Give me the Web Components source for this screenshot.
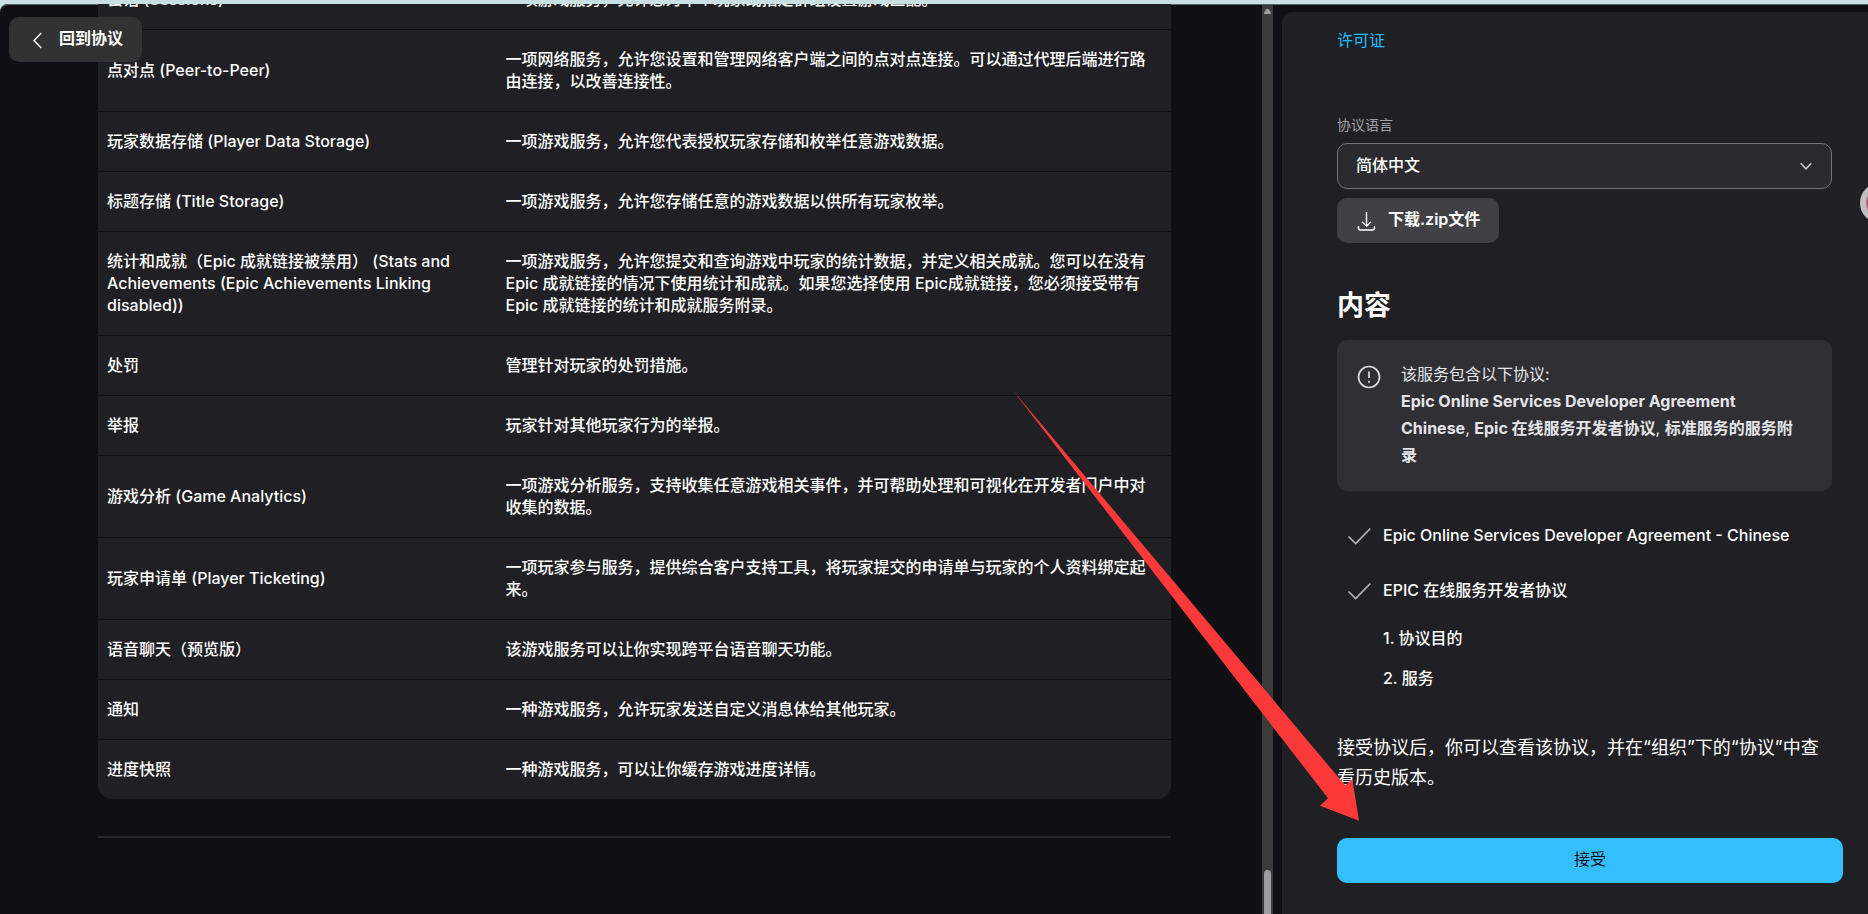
<!DOCTYPE html>
<html lang="zh-CN">
<head>
<meta charset="utf-8">
<title>回到协议</title>
<style>
	html, body {
		height: 100%;
		margin: 0;
		background: #c8e0e4;
	}
	body {
		font: 16px/22px Inter, "Noto Sans CJK SC", sans-serif;
		color: #fff;
		overflow: hidden;
	}
</style>
</head>
<body>
<eos-app></eos-app>

<script>
class EosApp extends HTMLElement {
	constructor() {
		super();
		this.attachShadow({ mode: 'open' });
	}

	connectedCallback() {
		this.shadowRoot.innerHTML = `
			<style>
				:host {
					box-sizing: border-box;
					display: flex;
					height: 100vh;
					padding-top: 4px;
				}
				.window {
					background: #101014;
					border-radius: 8px 0 0 0;
					box-shadow: inset 0 1px #56646a;
					display: grid;
					flex: 1;
					grid-template-columns: minmax(0, 1262fr) 11px minmax(0, 595fr);
					min-height: 0;
					overflow: hidden;
					position: relative;
				}
				eos-back-button {
					left: 9px;
					position: absolute;
					top: 13px;
				}
			</style>
			<div class="window">
				<eos-document></eos-document>
				<eos-scrollbar></eos-scrollbar>
				<eos-sidebar></eos-sidebar>
				<eos-back-button>回到协议</eos-back-button>
			</div>
			<eos-assist-bubble></eos-assist-bubble>
			<eos-arrow></eos-arrow>
		`;
	}
}

class EosBackButton extends HTMLElement {
	constructor() {
		super();
		this.attachShadow({ mode: 'open' });
		this.shadowRoot.innerHTML = `
			<style>
				:host { display: block; }
				button {
					align-items: center;
					background: #323233;
					border: 0;
					border-radius: 10px;
					color: #fff;
					display: flex;
					font: inherit;
					font-weight: 600;
					gap: 16px;
					height: 45px;
					padding: 0 19px 0 22px;
				}
				span { padding-bottom: 3px; }
			</style>
			<button type="button">
				<svg width="12" height="18" viewBox="0 0 12 18" fill="none" stroke="#fff" stroke-width="1.4" aria-hidden="true">
					<path d="M10.300 2 3 9.500l7.300 7.500"/>
				</svg>
				<span><slot></slot></span>
			</button>
		`;
	}
}

class EosDocument extends HTMLElement {
	constructor() {
		super();
		this.attachShadow({ mode: 'open' });
		this.rows = [
			['会话 (Sessions)', '一项游戏服务，允许您为单个玩家或指定群组设置游戏匹配。'],
			['点对点 (Peer-to-Peer)', '一项网络服务，允许您设置和管理网络客户端之间的点对点连接。可以通过代理后端进行路由连接，以改善连接性。'],
			['玩家数据存储 (Player Data Storage)', '一项游戏服务，允许您代表授权玩家存储和枚举任意游戏数据。'],
			['标题存储 (Title Storage)', '一项游戏服务，允许您存储任意的游戏数据以供所有玩家枚举。'],
			['统计和成就（Epic 成就链接被禁用） (Stats and Achievements (Epic Achievements Linking disabled))', '一项游戏服务，允许您提交和查询游戏中玩家的统计数据，并定义相关成就。您可以在没有 Epic 成就链接的情况下使用统计和成就。如果您选择使用 Epic成就链接，您必须接受带有 Epic 成就链接的统计和成就服务附录。'],
			['处罚', '管理针对玩家的处罚措施。'],
			['举报', '玩家针对其他玩家行为的举报。'],
			['游戏分析 (Game Analytics)', '一项游戏分析服务，支持收集任意游戏相关事件，并可帮助处理和可视化在开发者门户中对收集的数据。'],
			['玩家申请单 (Player Ticketing)', '一项玩家参与服务，提供综合客户支持工具，将玩家提交的申请单与玩家的个人资料绑定起来。'],
			['语音聊天（预览版）', '该游戏服务可以让你实现跨平台语音聊天功能。'],
			['通知', '一种游戏服务，允许玩家发送自定义消息体给其他玩家。'],
			['进度快照', '一种游戏服务，可以让你缓存游戏进度详情。']
		];
	}

	connectedCallback() {
		this.render();
	}

	render() {
		this.shadowRoot.innerHTML = `
			<style>
				/* the last rows stay in view, earlier ones run off the top */
				:host {
					display: flex;
					flex-direction: column;
					justify-content: flex-end;
					min-height: 0;
					overflow: hidden;
					padding: 0 91px 76px 98px;
				}
				table {
					background: #202024;
					border-collapse: separate;
					border-radius: 0 0 14px 14px;
					border-spacing: 0;
					table-layout: fixed;
					width: 100%;
				}
				th, td {
					border-top: 1px solid #101014;
					font-weight: 500;
					padding: 18px 12px 19px 9px;
					text-align: left;
					vertical-align: middle;
				}
				th { width: 35%; }
				td { padding-left: 11px; }
				hr {
					background: #28282c;
					border: 0;
					flex: none;
					height: 2px;
					margin: 37px 0 0;
					width: 100%;
				}
			</style>
			<table>
				<tbody>
					${this.rows.map(([name, text]) => `<tr><th scope="row">${name}</th><td>${text}</td></tr>`).join('')}
				</tbody>
			</table>
			<hr>
		`;
	}
}

class EosScrollbar extends HTMLElement {
	constructor() {
		super();
		this.attachShadow({ mode: 'open' });
		this.shadowRoot.innerHTML = `
			<style>
				:host {
					align-items: center;
					background: #3b3b3c;
					display: flex;
					flex-direction: column;
					justify-content: space-between;
					margin-top: 1px;
				}
				svg { margin-top: 3px; }
				.thumb {
					background: #9d9d9f;
					border-radius: 4px 4px 0 0;
					height: 44px;
					width: 7px;
				}
			</style>
			<svg width="7" height="7" viewBox="0 0 7 7" aria-hidden="true"><path d="M2 1.500Q3.500 0 5 1.500L7 5v1H0V5Z" fill="#9d9d9f"/></svg>
			<div class="thumb"></div>
		`;
	}
}

class EosSidebar extends HTMLElement {
	constructor() {
		super();
		this.attachShadow({ mode: 'open' });
	}

	connectedCallback() {
		this.shadowRoot.innerHTML = `
			<style>
				:host {
					background: #202024;
					border-radius: 10px 0 0 0;
					box-sizing: border-box;
					display: flex;
					flex-direction: column;
					margin: 8px 0 0 9px;
					min-height: 0;
					overflow: hidden;
					padding: 17px 25px 31px 55px;
				}
				a {
					align-self: flex-start;
					color: #26bbff;
					text-decoration: none;
				}
				.main { margin-right: 11px; }
				eos-language { margin-top: 64px; }
				eos-download { margin-top: 9px; }
				h2 {
					font-size: 27px;
					font-weight: 700;
					line-height: 36px;
					margin: 45px 0 16px;
				}
				.agreements {
					display: grid;
					gap: 33px;
					margin-top: 33px;
				}
				ol {
					display: grid;
					font-weight: 500;
					gap: 18px;
					list-style: none;
					margin: 26px 0 0;
					padding: 0 0 0 46px;
				}
				.hint {
					font-size: 18px;
					line-height: 30px;
					margin: 44px 0;
				}
				.accept {
					background: #33bfff;
					border: 0;
					border-radius: 10px;
					color: #101014;
					font: inherit;
					flex: none;
					height: 45px;
					margin-top: auto;
					padding: 0 0 4px;
				}
			</style>
			<a href="#license">许可证</a>
			<div class="main">
				<eos-language></eos-language>
				<eos-download>下载.zip文件</eos-download>
				<h2>内容</h2>
				<eos-notice>
					该服务包含以下协议:<br>
					<b>Epic Online Services Developer Agreement Chinese</b>, <b>Epic 在线服务开发者协议</b>, <b>标准服务的服务附录</b>
				</eos-notice>
				<div class="agreements">
					<eos-agreement>Epic Online Services Developer Agreement - Chinese</eos-agreement>
					<eos-agreement>EPIC 在线服务开发者协议</eos-agreement>
				</div>
				<ol>
					<li>1. 协议目的</li>
					<li>2. 服务</li>
				</ol>
				<p class="hint">接受协议后，你可以查看该协议，并在“组织”下的“协议”中查看历史版本。</p>
			</div>
			<button class="accept" type="button">接受</button>
		`;
	}
}

class EosLanguage extends HTMLElement {
	constructor() {
		super();
		this.attachShadow({ mode: 'open' });
		this.shadowRoot.innerHTML = `
			<style>
				:host { display: block; }
				label {
					color: #a0a0a4;
					display: block;
					font-size: 14px;
					line-height: 20px;
					margin-bottom: 8px;
				}
				.field { display: grid; }
				.field > * { grid-area: 1 / 1; }
				select {
					appearance: none;
					background: #2b2b2f;
					border: 1px solid #717176;
					border-radius: 10px;
					color: #fff;
					font: inherit;
					font-weight: 500;
					height: 46px;
					padding: 0 40px 2px 18px;
					width: 100%;
				}
				svg {
					align-self: center;
					justify-self: end;
					margin-right: 20px;
					pointer-events: none;
				}
			</style>
			<label for="language">协议语言</label>
			<div class="field">
				<select id="language">
					<option>简体中文</option>
				</select>
				<svg width="12" height="8" viewBox="0 0 12 8" fill="none" stroke="#c4c4c8" stroke-width="1.600" aria-hidden="true">
					<path d="m.7 1.200 5.300 5.600 5.300-5.600"/>
				</svg>
			</div>
		`;
	}
}

class EosDownload extends HTMLElement {
	constructor() {
		super();
		this.attachShadow({ mode: 'open' });
		this.shadowRoot.innerHTML = `
			<style>
				:host { display: flex; }
				button {
					align-items: center;
					background: #414145;
					border: 0;
					border-radius: 10px;
					color: #fff;
					display: flex;
					font: inherit;
					font-weight: 600;
					gap: 12px;
					height: 45px;
					padding: 0 19px 0 20px;
				}
				span { padding-bottom: 3px; }
			</style>
			<button type="button">
				<svg width="19" height="20" viewBox="0 0 19 20" fill="none" stroke="#fff" stroke-width="1.400" aria-hidden="true">
					<path d="M9.500 1v14M5 10.800l4.500 4.400 4.500-4.400M1.500 15v2q0 2 2 2h12q2 0 2-2v-2"/>
				</svg>
				<span><slot></slot></span>
			</button>
		`;
	}
}

class EosNotice extends HTMLElement {
	constructor() {
		super();
		this.attachShadow({ mode: 'open' });
		this.shadowRoot.innerHTML = `
			<style>
				:host {
					background: #303034;
					border-radius: 10px;
					color: #e4e4e8;
					display: flex;
					gap: 20px;
					line-height: 27px;
					padding: 21px 24px 22px 20px;
				}
				svg {
					flex: none;
					margin-top: 4px;
				}
			</style>
			<svg width="24" height="24" viewBox="0 0 24 24" fill="none" stroke="#dcdce0" stroke-width="1.700" aria-hidden="true">
				<circle cx="12" cy="12" r="10.500"/>
				<path d="M12 6.500v6.500M12 15.800v2"/>
			</svg>
			<div><slot></slot></div>
		`;
	}
}

class EosAgreement extends HTMLElement {
	constructor() {
		super();
		this.attachShadow({ mode: 'open' });
		this.shadowRoot.innerHTML = `
			<style>
				:host {
					align-items: center;
					display: flex;
					font-weight: 500;
					gap: 12px;
					padding-left: 10px;
				}
				svg {
					flex: none;
					margin-top: 2px;
				}
			</style>
			<svg width="24" height="18" viewBox="0 0 24 18" fill="none" stroke="#b4b4b8" stroke-width="1.700" aria-hidden="true">
				<path d="m1.500 9.500 7.200 7L23.300 1.500"/>
			</svg>
			<span><slot></slot></span>
		`;
	}
}

/* floating helper docked at the right edge, mostly off screen */
class EosAssistBubble extends HTMLElement {
	constructor() {
		super();
		this.attachShadow({ mode: 'open' });
		this.shadowRoot.innerHTML = `
			<style>
				:host {
					background: #c4607c;
					border: 6px solid #c0c0c0;
					border-radius: 50%;
					box-sizing: border-box;
					display: block;
					height: 40px;
					position: absolute;
					right: -32px;
					top: 183px;
					width: 40px;
				}
			</style>
		`;
	}
}

/* marker pointing at the accept button */
class EosArrow extends HTMLElement {
	constructor() {
		super();
		this.attachShadow({ mode: 'open' });
		this.shadowRoot.innerHTML = `
			<style>
				:host {
					display: block;
					left: 1013px;
					pointer-events: none;
					position: absolute;
					top: 390px;
				}
				svg { display: block; }
			</style>
			<svg width="347" height="432" viewBox="0 0 347 432" aria-hidden="true">
				<path d="M0 .5 332.300 395.500l7-6.200 6.700 41.500-39-15 8-7.500Z" fill="#fc3939"/>
			</svg>
		`;
	}
}

customElements.define('eos-app', EosApp);
customElements.define('eos-back-button', EosBackButton);
customElements.define('eos-document', EosDocument);
customElements.define('eos-scrollbar', EosScrollbar);
customElements.define('eos-sidebar', EosSidebar);
customElements.define('eos-language', EosLanguage);
customElements.define('eos-download', EosDownload);
customElements.define('eos-notice', EosNotice);
customElements.define('eos-agreement', EosAgreement);
customElements.define('eos-assist-bubble', EosAssistBubble);
customElements.define('eos-arrow', EosArrow);
</script>
</body>
</html>
